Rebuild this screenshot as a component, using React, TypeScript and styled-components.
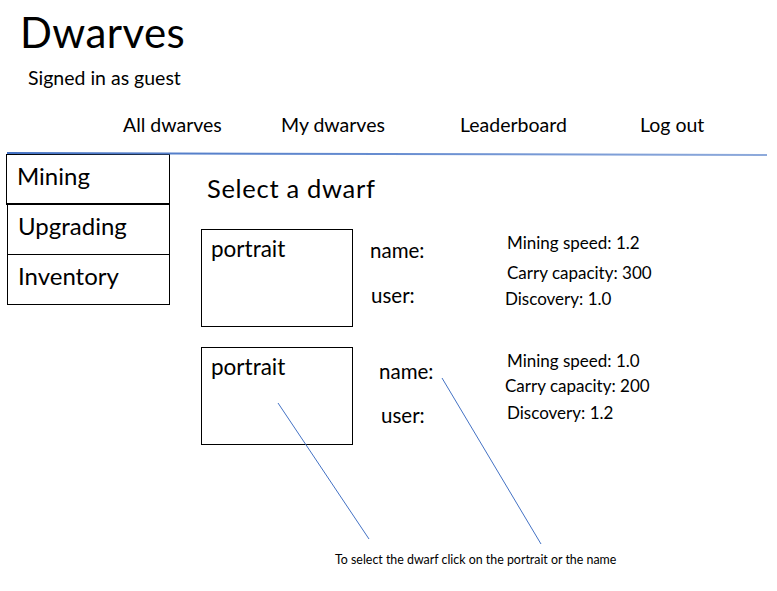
import React from 'react'
import styled, { createGlobalStyle } from 'styled-components'

interface Stat {
  label: string;
  value: string;
  gap: number;
  indent: number;
}

interface Dwarf {
  id: number;
  nameIndent: number;
  nameTop: number;
  userGap: number;
  userIndent: number;
  stats: Stat[];
}

const dwarves: Dwarf[] = [
  {
    id: 1,
    nameIndent: 17,
    nameTop: 10,
    userGap: 23,
    userIndent: 1,
    stats: [
      { label: 'Mining speed', value: '1.2', gap: 3, indent: 2 },
      { label: 'Carry capacity', value: '300', gap: 9, indent: 2 },
      { label: 'Discovery', value: '1.0', gap: 5, indent: 0 },
    ],
  },
  {
    id: 2,
    nameIndent: 26,
    nameTop: 13,
    userGap: 22,
    userIndent: 2,
    stats: [
      { label: 'Mining speed', value: '1.0', gap: 3, indent: 2 },
      { label: 'Carry capacity', value: '200', gap: 4, indent: 0 },
      { label: 'Discovery', value: '1.2', gap: 6, indent: 2 },
    ],
  },
]

const GlobalStyle = createGlobalStyle`
  html, body {
    margin: 0;
    padding: 0;
    background: #fff;
  }
`

const StyledPage = styled.div`
  position: relative;
  width: 777px;
  height: 591px;
  overflow: hidden;
  background: #fff;
  color: #000;
  font-family: 'Lato', 'Liberation Sans', sans-serif;
`

const StyledHeader = styled.header`
  padding: 6px 0 0 20px;

  h1 {
    margin: 0;
    font-size: 42px;
    font-weight: 400;
    line-height: 52px;
    letter-spacing: 0.4px;
  }

  .signed-in {
    margin: 9px 0 0 8px;
    font-size: 19.5px;
    line-height: 22px;
  }
`

const StyledNav = styled.nav`
  display: grid;
  grid-template-columns: 158px 179px 180px auto;
  padding-left: 123px;
  margin-top: 25px;
  font-size: 19.5px;
  line-height: 22px;
`

const StyledDivider = styled.div`
  margin: 16px 10px 0 7px;
  height: 2px;
  background: linear-gradient(to right, #4472c4, #6f93d3 60%, #8eaadb);
  transform: rotate(0.15deg);
  transform-origin: left center;
`

const StyledMain = styled.main`
  display: flex;
  padding-left: 7px;
`

const StyledSidebar = styled.ul`
  list-style: none;
  margin: 0;
  padding: 0;
  width: 163px;
  display: flex;
  flex-flow: column nowrap;
`

const StyledSideItem = styled.li<{ $active?: boolean }>`
  box-sizing: border-box;
  height: ${p => (p.$active ? 51 : 50)}px;
  border: 1px solid #000;
  border-top-width: ${p => (p.$active ? 1 : 0)}px;
  border-bottom-width: ${p => (p.$active ? 2 : 1)}px;
  margin-left: ${p => (p.$active ? -1 : 0)}px;
  padding: 6px 0 0 10px;
  font-size: 24px;
  line-height: 30px;
`

const StyledContent = styled.section`
  flex: 1;
  padding-left: 31px;

  h2 {
    margin: 19px 0 0 6px;
    font-size: 25.5px;
    font-weight: 400;
    line-height: 30px;
    letter-spacing: 0.7px;
  }
`

const StyledDwarfList = styled.div`
  display: flex;
  flex-flow: column nowrap;
  gap: 20px;
  margin-top: 26px;
`

const StyledDwarfRow = styled.div`
  display: grid;
  grid-template-columns: 152px 154px auto;
`

const StyledPortrait = styled.div`
  box-sizing: border-box;
  height: 98px;
  border: 1px solid #000;
  padding: 6px 0 0 9px;
  font-size: 22.5px;
  line-height: 26px;
`

const StyledIdentity = styled.div<{ $indent: number; $top: number }>`
  padding: ${p => p.$top}px 0 0 ${p => p.$indent}px;
  font-size: 20.5px;
  line-height: 22px;
`

const StyledUser = styled.div<{ $gap: number; $indent: number }>`
  margin: ${p => p.$gap}px 0 0 ${p => p.$indent}px;
`

const StyledStats = styled.div`
  padding-top: 3px;
  font-size: 17px;
  line-height: 21px;
`

const StyledStat = styled.div<{ $gap: number; $indent: number }>`
  margin: ${p => p.$gap}px 0 0 ${p => p.$indent - 2}px;
`

const StyledNote = styled.p`
  margin: 108px 0 0 134px;
  font-size: 12.4px;
  line-height: 14px;
`

const StyledAnnotations = styled.svg`
  position: absolute;
  left: 0;
  top: 0;
  pointer-events: none;
`

const DwarfRow = ({ dwarf }: { dwarf: Dwarf }) => (
  <StyledDwarfRow>
    <StyledPortrait>portrait</StyledPortrait>
    <StyledIdentity $indent={dwarf.nameIndent} $top={dwarf.nameTop}>
      <div>name:</div>
      <StyledUser $gap={dwarf.userGap} $indent={dwarf.userIndent}>user:</StyledUser>
    </StyledIdentity>
    <StyledStats>
      {dwarf.stats.map((s, i) => (
        <StyledStat key={s.label} $gap={i === 0 ? 0 : s.gap} $indent={s.indent}>
          {s.label}: {s.value}
        </StyledStat>
      ))}
    </StyledStats>
  </StyledDwarfRow>
)

const App = () => {
  return (
    <StyledPage>
      <GlobalStyle />
      <StyledHeader>
        <h1>Dwarves</h1>
        <p className="signed-in">Signed in as guest</p>
      </StyledHeader>
      <StyledNav>
        <span>All dwarves</span>
        <span>My dwarves</span>
        <span>Leaderboard</span>
        <span>Log out</span>
      </StyledNav>
      <StyledDivider />
      <StyledMain>
        <StyledSidebar>
          <StyledSideItem $active>Mining</StyledSideItem>
          <StyledSideItem>Upgrading</StyledSideItem>
          <StyledSideItem>Inventory</StyledSideItem>
        </StyledSidebar>
        <StyledContent>
          <h2>Select a dwarf</h2>
          <StyledDwarfList>
            {dwarves.map(d => <DwarfRow key={d.id} dwarf={d} />)}
          </StyledDwarfList>
          <StyledNote>To select the dwarf click on the portrait or the name</StyledNote>
        </StyledContent>
      </StyledMain>
      <StyledAnnotations width="777" height="591" viewBox="0 0 777 591">
        <line x1="278" y1="403" x2="369" y2="539" stroke="#4472c4" strokeWidth="1" />
        <line x1="442" y1="378" x2="541" y2="544" stroke="#4472c4" strokeWidth="1" />
      </StyledAnnotations>
    </StyledPage>
  )
}

export default App
